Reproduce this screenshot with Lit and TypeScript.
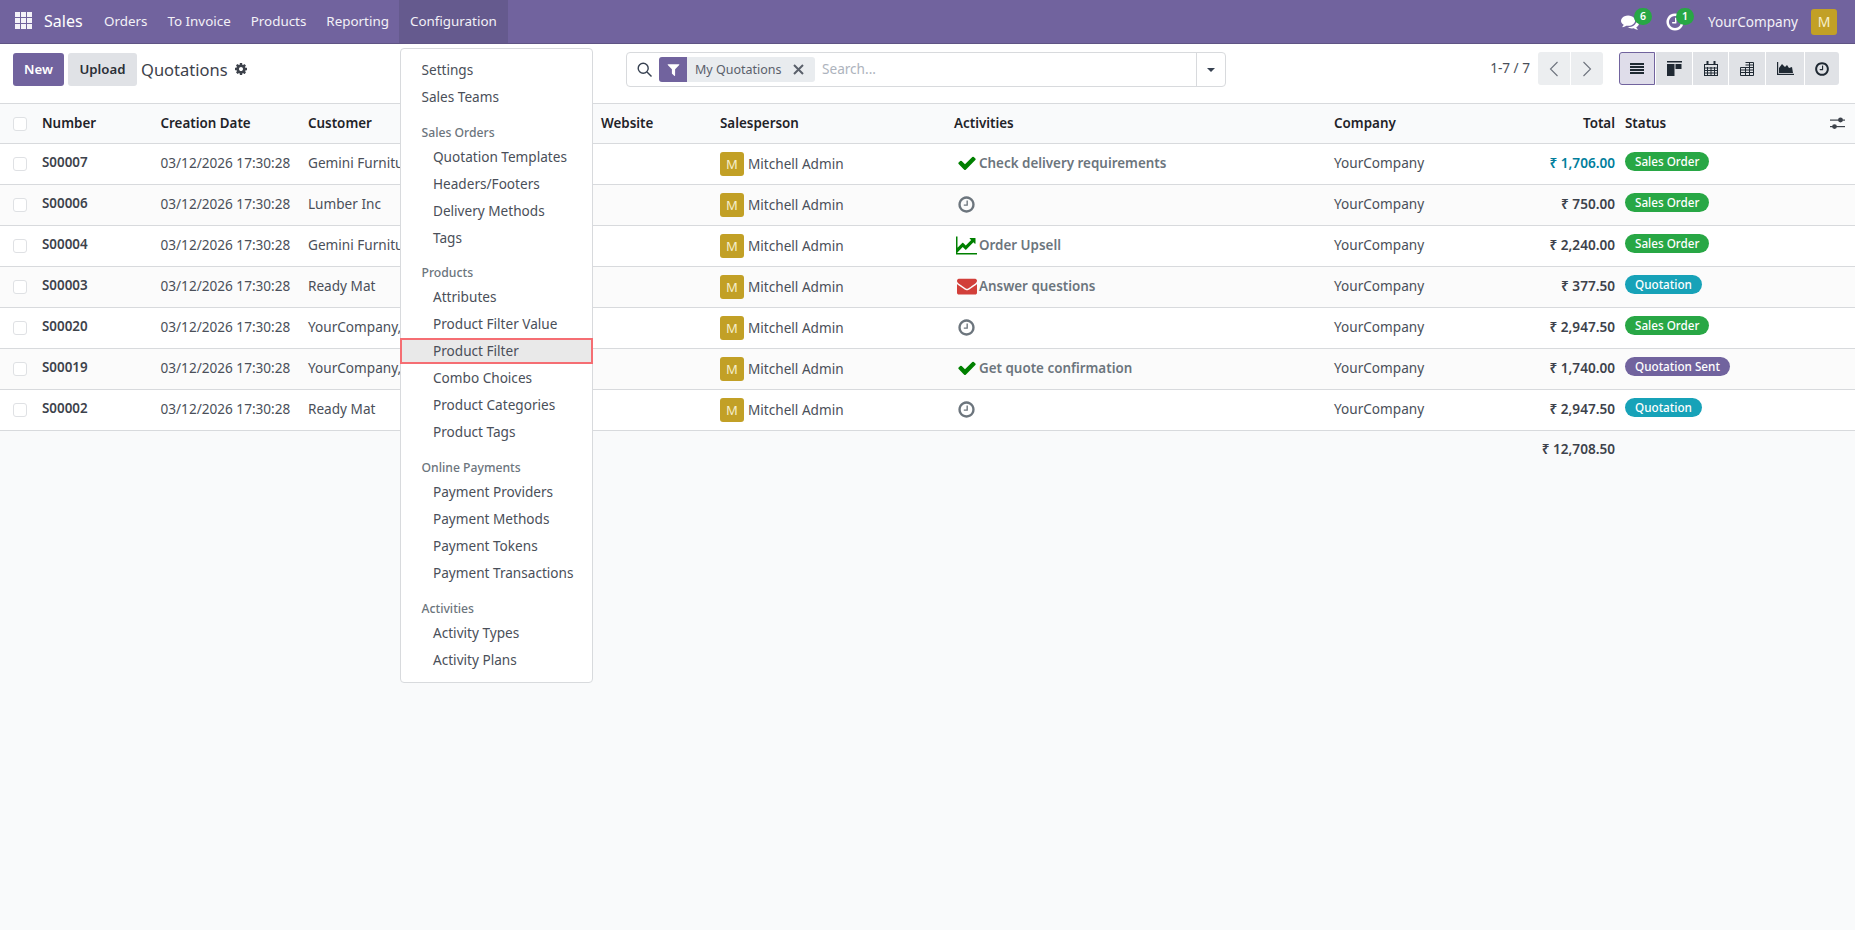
import { LitElement, css, html } from "lit";
import { customElement } from "lit/decorators.js";

const fa = (d: string, size: number, cls = "") =>
  html`<svg class=${cls} width=${size} height=${size} viewBox="0 0 1792 1792" fill="currentColor"><path d=${d}></path></svg>`;

const GEAR = "M1152 896q0-106-75-181t-181-75-181 75-75 181 75 181 181 75 181-75 75-181zm512-109v222q0 12-8 23t-20 13l-185 28q-19 54-39 91 35 50 107 138 10 12 10 25t-9 23q-27 37-99 108t-94 71q-12 0-26-9l-138-108q-44 23-91 38-16 136-29 186-7 28-36 28h-222q-14 0-24.5-8.5t-11.5-21.5l-28-184q-49-16-90-37l-141 107q-10 9-25 9-14 0-25-11-126-114-165-168-7-10-7-23 0-12 8-23 15-21 51-66.5t54-70.5q-27-50-41-99l-183-27q-13-2-21-12.5t-8-23.5v-222q0-12 8-23t19-13l186-28q14-46 39-92-40-57-107-138-10-12-10-24 0-10 9-23 26-36 98.5-107.5t94.5-71.5q13 0 26 10l138 107q44-23 91-38 16-136 29-186 7-28 36-28h222q14 0 24.5 8.5t11.5 21.5l28 184q49 16 90 37l142-107q9-9 24-9 13 0 25 10 129 119 165 170 7 8 7 22 0 12-8 23-15 21-51 66.5t-54 70.5q26 50 41 98l183 28q13 2 21 12.5t8 23.5z";
const CHECK = "M1671 566q0 40-28 68l-724 724-136 136q-28 28-68 28t-68-28l-136-136-362-362q-28-28-28-68t28-68l136-136q28-28 68-28t68 28l294 295 656-657q28-28 68-28t68 28l136 136q28 28 28 68z";
const MAIL = "M1792 710v794q0 66-47 113t-113 47h-1472q-66 0-113-47t-47-113v-794q44 49 101 87 362 246 497 345 57 42 92.5 65.5t94.5 48 110 24.5h2q51 0 110-24.5t94.5-48 92.5-65.5q170-123 498-345 57-39 100-87zm0-294q0 79-49 151t-122 123q-376 261-468 325-10 7-42.5 30.5t-54 38-52 32.5-57.5 27-50 9h-2q-23 0-50-9t-57.5-27-52-32.5-54-38-42.5-30.5q-91-64-262-182.5t-205-142.5q-62-42-117-115.5t-55-136.5q0-78 41.5-130t118.5-52h1472q65 0 112.5 47t47.5 113z";
const CLOCK = "M1024 544v448q0 14-9 23t-23 9h-320q-14 0-23-9t-9-23v-64q0-14 9-23t23-9h224v-352q0-14 9-23t23-9h64q14 0 23 9t9 23zm416 352q0-148-73-273t-198-198-273-73-273 73-198 198-73 273 73 273 198 198 273 73 273-73 198-198 73-273zm224 0q0 209-103 385.5t-279.5 279.5-385.5 103-385.5-103-279.5-279.5-103-385.5 103-385.5 279.5-279.5 385.5-103 385.5 103 279.5 279.5 103 385.5z";
const CHART = "M1792 1536v128h-1792v-1536h128v1408h1664zm-128-1248v435q0 21-19.5 29.5t-35.5-7.5l-121-121-633 633q-10 10-23 10t-23-10l-233-233-416 416-192-192 585-585q10-10 23-10t23 10l233 233 464-464-121-121q-16-16-7.5-35.5t29.5-19.5h435q14 0 23 9t9 23z";
const FILTER = "M1595 295q17 41-14 70l-493 493v742q0 42-39 59-13 5-25 5-27 0-45-19l-256-256q-19-19-19-45v-486l-493-493q-31-29-14-70 17-39 59-39h1280q42 0 59 39z";
const COMMENTS = "M1408 768q0 139-94 257t-256.5 186.5-353.5 68.5q-86 0-176-16-124 88-278 128-36 9-86 16h-3q-11 0-20.5-8t-11.5-21q-1-3-1-6.5t.5-6.5 2-6l2.5-5 3.5-5.5 4-5 4.5-5 4-4.5q5-6 23-25t26-29.5 22.5-29 25-38.5 20.5-44q-124-72-195-177t-71-224q0-139 94-257t256.5-186.5 353.5-68.5 353.5 68.5 256.5 186.5 94 257zm384 256q0 120-71 224.5t-195 176.5q10 24 20.5 44t25 38.5 22.5 29 26 29.5 23 25q1 1 4 4.5t4.5 5 4 5 3.5 5.5l2.5 5 2 6 .5 6.5-1 6.5q-3 14-13 22t-22 7q-50-7-86-16-154-40-278-128-90 16-176 16-271 0-472-132 58 4 88 4 161 0 309-45t264-129q125-92 192-212t67-254q0-77-23-152 129 71 204 178t75 230z";

type Row = { num: string; customer: string; icon: string; label?: string; total: string; status: string; blue?: boolean };

const ROWS: Row[] = [
  { num: "S00007", customer: "Gemini Furniture", icon: "check", label: "Check delivery requirements", total: "₹ 1,706.00", status: "Sales Order", blue: true },
  { num: "S00006", customer: "Lumber Inc", icon: "clock", total: "₹ 750.00", status: "Sales Order" },
  { num: "S00004", customer: "Gemini Furniture", icon: "chart", label: "Order Upsell", total: "₹ 2,240.00", status: "Sales Order" },
  { num: "S00003", customer: "Ready Mat", icon: "mail", label: "Answer questions", total: "₹ 377.50", status: "Quotation" },
  { num: "S00020", customer: "YourCompany, Joel", icon: "clock", total: "₹ 2,947.50", status: "Sales Order" },
  { num: "S00019", customer: "YourCompany, Joel", icon: "check", label: "Get quote confirmation", total: "₹ 1,740.00", status: "Quotation Sent" },
  { num: "S00002", customer: "Ready Mat", icon: "clock", total: "₹ 2,947.50", status: "Quotation" },
];

const MENU: { head?: string; items: string[] }[] = [
  { items: ["Settings", "Sales Teams"] },
  { head: "Sales Orders", items: ["Quotation Templates", "Headers/Footers", "Delivery Methods", "Tags"] },
  { head: "Products", items: ["Attributes", "Product Filter Value", "Product Filter", "Combo Choices", "Product Categories", "Product Tags"] },
  { head: "Online Payments", items: ["Payment Providers", "Payment Methods", "Payment Tokens", "Payment Transactions"] },
  { head: "Activities", items: ["Activity Types", "Activity Plans"] },
];

const STATUS_CLASS: Record<string, string> = {
  "Sales Order": "green",
  Quotation: "teal",
  "Quotation Sent": "purple",
};

@customElement("app-root")
export class AppRoot extends LitElement {
  static styles = css`
    :host {
      display: block;
      position: relative;
      min-height: 100vh;
      background: #f9fafb;
      color: #4a4f59;
      font-family: "Noto Sans", sans-serif;
      font-size: 13.6px;
      overflow: hidden;
    }
    * {
      box-sizing: border-box;
    }
    .navbar {
      height: 44px;
      background: #71639e;
      border-bottom: 1px solid #5f5484;
      display: flex;
      align-items: stretch;
      color: #fff;
    }
    .apps {
      width: 44px;
      display: grid;
      grid-template-columns: repeat(3, 5px);
      grid-auto-rows: 5px;
      gap: 1px;
      padding: 12px 0 0 15px;
    }
    .apps i {
      background: #f4f2f8;
    }
    .brand {
      font-size: 16px;
      width: 50px;
      line-height: 43px;
    }
    .nav-item {
      padding: 0 10px;
      font-size: 13.4px;
      line-height: 42px;
      color: #f3f1f7;
    }
    .nav-item.open {
      padding: 0 11px;
      background: #655a8e;
    }
    .nav-right {
      margin-left: auto;
      display: flex;
      align-items: center;
      padding-right: 18px;
    }
    .sys {
      position: relative;
      display: flex;
    }
    .sys.chat {
      margin-right: 26px;
    }
    .badge {
      position: absolute;
      width: 18px;
      height: 17px;
      border-radius: 9px;
      background: #28a745;
      font-size: 10.5px;
      font-weight: 600;
      line-height: 16px;
      text-align: center;
      color: #fff;
      top: -5px;
      left: 13px;
    }
    .badge.second {
      top: -4px;
      left: 11px;
    }
    .company {
      margin: 0 13px 0 23px;
      color: #f3f1f7;
    }
    .avatar-top {
      width: 26px;
      height: 26px;
      border-radius: 3px;
      background: #c2a026;
      color: #f6eecb;
      text-align: center;
      line-height: 26px;
      font-size: 14px;
    }
    .panel {
      height: 60px;
      background: #fff;
      border-bottom: 1px solid #d8dadd;
      display: grid;
      grid-template-columns: 626px 600px 1fr;
      padding-top: 8px;
    }
    .left {
      display: flex;
      align-items: flex-start;
      padding: 1px 0 0 13px;
    }
    .btn {
      height: 33px;
      border-radius: 3px;
      font-size: 13.2px;
      font-weight: 600;
      line-height: 32px;
      text-align: center;
    }
    .btn.new {
      width: 51px;
      background: #71639e;
      color: #fff;
    }
    .btn.upload {
      width: 69px;
      margin-left: 4px;
      background: #e0e2e6;
      color: #2b2f36;
    }
    .title {
      font-size: 16.5px;
      line-height: 33px;
      margin-left: 4px;
      color: #3d424b;
    }
    .gear {
      margin: 9px 0 0 6px;
      color: #3d424b;
    }
    .search {
      height: 35px;
      background: #fff;
      border: 1px solid #d8dadd;
      border-radius: 4px;
      display: flex;
      align-items: center;
      padding-left: 10px;
    }
    .search svg.mag {
      color: #374151;
      margin-right: 7px;
    }
    .facet {
      height: 25px;
      width: 156px;
      display: flex;
      align-items: center;
      background: #e9ecef;
      border-radius: 3px;
      overflow: hidden;
      color: #5a606b;
      font-size: 12.5px;
    }
    .facet .ficon {
      width: 28px;
      height: 25px;
      background: #71639e;
      color: #fff;
      display: flex;
      align-items: center;
      justify-content: center;
      margin-right: 8px;
    }
    .facet .x {
      margin-left: auto;
      margin-right: 11px;
      color: #5a606b;
    }
    .placeholder {
      margin: 0 0 2px 7px;
      color: #adb3bd;
      flex: 1;
    }
    .caret-box {
      width: 29px;
      height: 33px;
      border-left: 1px solid #d8dadd;
      display: flex;
      align-items: center;
      justify-content: center;
    }
    .caret {
      border-top: 4px solid #374151;
      border-left: 4.5px solid transparent;
      border-right: 4.5px solid transparent;
    }
    .right {
      display: flex;
      justify-content: flex-end;
      align-items: flex-start;
      padding-right: 16px;
    }
    .pager-text {
      line-height: 32px;
      margin-right: 8px;
    }
    .pager {
      display: flex;
      gap: 1px;
      margin-right: 16px;
    }
    .pager div {
      width: 32px;
      height: 33px;
      background: #eceef0;
      display: flex;
      align-items: center;
      justify-content: center;
      color: #6d737d;
    }
    .pager div:first-child {
      border-radius: 3px 0 0 3px;
    }
    .pager div:last-child {
      border-radius: 0 3px 3px 0;
    }
    .views {
      display: flex;
      gap: 1px;
    }
    .views div {
      height: 33px;
      background: #e0e2e6;
      display: flex;
      align-items: center;
      justify-content: center;
      color: #1f2933;
    }
    .views div:first-child {
      background: #dfddea;
      border: 1px solid #71639e;
      border-radius: 3px 0 0 3px;
    }
    .views div:last-child {
      border-radius: 0 3px 3px 0;
    }
    table {
      width: 100%;
      table-layout: fixed;
      border-collapse: separate;
      border-spacing: 0;
    }
    th {
      height: 40px;
      padding: 0 8px 2px;
      text-align: left;
      font-size: 13.4px;
      font-weight: 600;
      color: #1f2329;
      background: #f9fafb;
      border-bottom: 1px solid #d8dadd;
      white-space: nowrap;
    }
    td {
      height: 41px;
      padding: 0 8px 4px;
      background: #fff;
      border-bottom: 1px solid #d8dadd;
      white-space: nowrap;
      overflow: hidden;
    }
    tbody tr:nth-child(even) td {
      background: #fbfbfb;
    }
    .r {
      text-align: right;
      padding-right: 5px;
    }
    .s {
      padding-left: 5px;
    }
    .num {
      font-size: 13.4px;
      font-weight: 600;
      color: #3d424b;
    }
    .box {
      display: block;
      width: 14px;
      height: 14px;
      margin-left: 13px;
      background: #fff;
      border: 1px solid #dfe1e4;
      border-radius: 3px;
    }
    .person {
      display: flex;
      align-items: center;
      gap: 4px;
      padding-top: 4px;
    }
    .person .name {
      padding-bottom: 2px;
    }
    .avatar {
      width: 24px;
      height: 24px;
      border-radius: 3px;
      background: #c2a026;
      color: #f6eecb;
      text-align: center;
      line-height: 24px;
      font-size: 13px;
    }
    .act {
      display: flex;
      align-items: center;
      padding-top: 2px;
      font-size: 13.4px;
      font-weight: 600;
      color: #6c757d;
    }
    .act .slot {
      width: 22px;
      margin-left: 3px;
      flex: none;
      display: flex;
      align-items: center;
    }
    .ic-check {
      color: #008000;
    }
    .ic-chart {
      color: #008000;
      margin-left: -1px;
    }
    .ic-mail {
      color: #d23f3a;
    }
    .ic-clock {
      color: #6c757d;
    }
    .total {
      font-size: 13.6px;
      font-weight: 600;
      color: #3d424b;
    }
    .total.blue {
      color: #017e9c;
    }
    .pill {
      display: inline-block;
      height: 19px;
      padding: 0 10px;
      border-radius: 10px;
      color: #fff;
      font-size: 11.7px;
      font-weight: 500;
      line-height: 18px;
      vertical-align: middle;
      margin-bottom: 2px;
    }
    .pill.green {
      background: #28a745;
    }
    .pill.teal {
      background: #17a2b8;
    }
    .pill.purple {
      background: #71639e;
    }
    tfoot td {
      height: 38px;
      background: transparent;
      border-bottom: none;
    }
    .opts {
      text-align: right;
      padding-right: 10px;
    }
    .opts svg {
      vertical-align: middle;
      color: #3d424b;
    }
    .menu {
      position: absolute;
      left: 400px;
      top: 48px;
      width: 193px;
      height: 635px;
      background: #fff;
      border: 1px solid #d8dadd;
      border-radius: 4px;
      padding: 8px 0;
    }
    .menu section + section {
      margin-top: 8px;
    }
    .menu section.tight {
      margin-top: 7px;
    }
    .menu h6 {
      margin: 0;
      height: 25px;
      padding-left: 20.5px;
      font-size: 12.2px;
      font-weight: 500;
      line-height: 27px;
      color: #6c757d;
    }
    .menu a {
      display: block;
      height: 27px;
      line-height: 26px;
      padding-left: 20.5px;
      color: #4a4f59;
    }
    .menu section.sub a {
      padding-left: 32px;
    }
    .menu section.sub a.hit {
      background: #e9e9e9;
      outline: 2px solid #f56e73;
      outline-offset: -2px;
      height: 26px;
      margin: 0 -1px 1px;
      padding-left: 33px;
    }
  `;

  private activityIcon(name: string) {
    if (name === "check") return fa(CHECK, 20, "ic-check");
    if (name === "chart") return fa(CHART, 21, "ic-chart");
    if (name === "mail") return fa(MAIL, 20, "ic-mail");
    return fa(CLOCK, 19, "ic-clock");
  }

  private viewIcon(i: number) {
    const icons = [
      html`<svg width="14" height="12" viewBox="0 0 14 12" fill="currentColor"><rect y="0" width="14" height="2"/><rect y="3" width="14" height="2"/><rect y="6" width="14" height="2"/><rect y="9" width="14" height="2"/></svg>`,
      html`<svg width="15" height="15" viewBox="0 0 15 15" fill="currentColor"><rect y="0" width="15" height="1.5"/><rect y="3" width="7.5" height="12"/><rect x="8.5" y="3" width="6" height="5"/></svg>`,
      html`<svg width="14" height="15" viewBox="0 0 14 15" fill="none" stroke="currentColor"><rect x=".5" y="3.5" width="13" height="11"/><path d="M.5 7h13M.5 9.5h13M.5 12h13M3.5 6v9M7 6v9M10.5 6v9"/><path d="M3.5 0v4M10.5 0v4" stroke-width="2"/></svg>`,
      html`<svg width="14" height="14" viewBox="0 0 14 14" fill="none" stroke="currentColor"><path d="M5.5 .5h8v13h-13v-8h13M.5 8h13M.5 10.5h13M5.5 5.5v8M9.5 .5v13M5.5 3h8"/></svg>`,
      html`<svg width="17" height="13" viewBox="0 0 17 13" fill="currentColor"><rect y="0" width="1.2" height="13"/><rect y="11.8" width="17" height="1.2"/><path d="M2 11V6l3-4 3 3 2-2 2 3 3-1 1 6z"/></svg>`,
      fa(CLOCK, 16),
    ];
    return icons[i];
  }

  render() {
    const heads = ["Number", "Creation Date", "Customer", "Website", "Salesperson", "Activities", "Company"];
    const viewW = [36, 36, 35, 36, 38, 34];
    return html`
      <header class="navbar">
        <div class="apps">${Array.from({ length: 9 }, () => html`<i></i>`)}</div>
        <div class="brand">Sales</div>
        ${["Orders", "To Invoice", "Products", "Reporting"].map((n) => html`<div class="nav-item">${n}</div>`)}
        <div class="nav-item open">Configuration</div>
        <div class="nav-right">
          <div class="sys chat">${fa(COMMENTS, 18)}<span class="badge">6</span></div>
          <div class="sys">${fa(CLOCK, 20)}<span class="badge second">1</span></div>
          <span class="company">YourCompany</span>
          <div class="avatar-top">M</div>
        </div>
      </header>

      <div class="panel">
        <div class="left">
          <div class="btn new">New</div>
          <div class="btn upload">Upload</div>
          <span class="title">Quotations</span>
          ${fa(GEAR, 14, "gear")}
        </div>
        <div class="search">
          <svg class="mag" width="15" height="15" viewBox="0 0 15 15" fill="none" stroke="currentColor" stroke-width="1.4"><circle cx="6.2" cy="6.2" r="5"/><path d="M10 10l4.5 4.5"/></svg>
          <div class="facet">
            <span class="ficon">${fa(FILTER, 15)}</span>
            <span>My Quotations</span>
            <svg class="x" width="11" height="11" viewBox="0 0 11 11" stroke="currentColor" stroke-width="2"><path d="M1 1l9 9M10 1l-9 9"/></svg>
          </div>
          <span class="placeholder">Search...</span>
          <div class="caret-box"><span class="caret"></span></div>
        </div>
        <div class="right">
          <span class="pager-text">1-7 / 7</span>
          <div class="pager">
            <div><svg width="10" height="16" viewBox="0 0 10 16" fill="none" stroke="currentColor" stroke-width="1.1"><path d="M8.5 1L1.5 8l7 7"/></svg></div>
            <div><svg width="10" height="16" viewBox="0 0 10 16" fill="none" stroke="currentColor" stroke-width="1.1"><path d="M1.5 1l7 7-7 7"/></svg></div>
          </div>
          <div class="views">
            ${viewW.map((w, i) => html`<div style="width:${w}px">${this.viewIcon(i)}</div>`)}
          </div>
        </div>
      </div>

      <table>
        <colgroup>
          ${[34, 118.5, 147.5, 293, 119, 234, 380, 174, 120, 160].map((w) => html`<col style="width:${w}px" />`)}
          <col />
        </colgroup>
        <thead>
          <tr>
            <th style="padding:0"><span class="box"></span></th>
            ${heads.map((h) => html`<th>${h}</th>`)}
            <th class="r">Total</th>
            <th class="s">Status</th>
            <th class="opts">
              <svg width="15" height="13" viewBox="0 0 15 13" fill="currentColor"><rect y="2.5" width="15" height="1.2"/><rect y="9" width="15" height="1.2"/><circle cx="10.5" cy="3" r="2.4"/><circle cx="4.5" cy="9.6" r="2.4"/></svg>
            </th>
          </tr>
        </thead>
        <tbody>
          ${ROWS.map((r) => html`
            <tr>
              <td style="padding:0"><span class="box"></span></td>
              <td class="num">${r.num}</td>
              <td>03/12/2026 17:30:28</td>
              <td>${r.customer}</td>
              <td></td>
              <td><div class="person"><span class="avatar">M</span><span class="name">Mitchell Admin</span></div></td>
              <td>
                <div class="act">
                  <span class="slot">${this.activityIcon(r.icon)}</span>${r.label ?? ""}
                </div>
              </td>
              <td>YourCompany</td>
              <td class="r total ${r.blue ? "blue" : ""}">${r.total}</td>
              <td class="s"><span class="pill ${STATUS_CLASS[r.status]}">${r.status}</span></td>
              <td></td>
            </tr>
          `)}
        </tbody>
        <tfoot>
          <tr>
            <td colspan="8"></td>
            <td class="r total">₹ 12,708.50</td>
            <td colspan="2"></td>
          </tr>
        </tfoot>
      </table>

      <nav class="menu">
        ${MENU.map((s, i) => html`
          <section class="${s.head ? "sub" : ""} ${i === 2 ? "tight" : ""}">
            ${s.head ? html`<h6>${s.head}</h6>` : ""}
            ${s.items.map((it) => html`<a class=${it === "Product Filter" ? "hit" : ""}>${it}</a>`)}
          </section>
        `)}
      </nav>
    `;
  }
}
